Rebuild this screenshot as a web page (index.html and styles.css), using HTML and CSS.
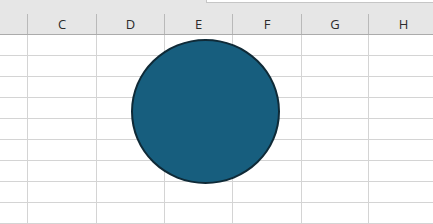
FILE: index.html
```html
<!DOCTYPE html>
<html>
<head>
<meta charset="utf-8">
<link rel="stylesheet" href="styles.css">
</head>
<body>
<div class="sheet">
  <div class="toolbar">
    <div class="spacer"></div>
    <div class="namebox"></div>
  </div>
  <div class="row header">
    <div class="cell c0"></div>
    <div class="cell c1">C</div>
    <div class="cell c2">D</div>
    <div class="cell c3">E</div>
    <div class="cell c4">F</div>
    <div class="cell c5">G</div>
    <div class="cell c6">H</div>
  </div>
  <div class="body">
    <div class="row"><div class="cell c0"></div><div class="cell c1"></div><div class="cell c2"></div><div class="cell c3"></div><div class="cell c4"></div><div class="cell c5"></div><div class="cell c6"></div></div>
    <div class="row"><div class="cell c0"></div><div class="cell c1"></div><div class="cell c2"></div><div class="cell c3"></div><div class="cell c4"></div><div class="cell c5"></div><div class="cell c6"></div></div>
    <div class="row"><div class="cell c0"></div><div class="cell c1"></div><div class="cell c2"></div><div class="cell c3"></div><div class="cell c4"></div><div class="cell c5"></div><div class="cell c6"></div></div>
    <div class="row"><div class="cell c0"></div><div class="cell c1"></div><div class="cell c2"></div><div class="cell c3"></div><div class="cell c4"></div><div class="cell c5"></div><div class="cell c6"></div></div>
    <div class="row"><div class="cell c0"></div><div class="cell c1"></div><div class="cell c2"></div><div class="cell c3"></div><div class="cell c4"></div><div class="cell c5"></div><div class="cell c6"></div></div>
    <div class="row"><div class="cell c0"></div><div class="cell c1"></div><div class="cell c2"></div><div class="cell c3"></div><div class="cell c4"></div><div class="cell c5"></div><div class="cell c6"></div></div>
    <div class="row"><div class="cell c0"></div><div class="cell c1"></div><div class="cell c2"></div><div class="cell c3"></div><div class="cell c4"></div><div class="cell c5"></div><div class="cell c6"></div></div>
    <div class="row"><div class="cell c0"></div><div class="cell c1"></div><div class="cell c2"></div><div class="cell c3"></div><div class="cell c4"></div><div class="cell c5"></div><div class="cell c6"></div></div>
    <div class="row"><div class="cell c0"></div><div class="cell c1"></div><div class="cell c2"></div><div class="cell c3"></div><div class="cell c4"></div><div class="cell c5"></div><div class="cell c6"></div></div>
  </div>
  <div class="shape"></div>
</div>
</body>
</html>
```
FILE: styles.css
```css
html, body {
  margin: 0;
  padding: 0;
  background: #ffffff;
  overflow: hidden;
}
.sheet {
  position: relative;
  width: 433px;
  height: 224px;
  overflow: hidden;
  font-family: "Open Sans", "Liberation Sans", sans-serif;
}
.toolbar {
  display: flex;
  height: 14px;
  background: #e6e6e6;
}
.spacer {
  flex: 0 0 206px;
}
.namebox {
  flex: 1;
  height: 2px;
  background: #ffffff;
  border-left: 1px solid #c6c6c6;
  border-bottom: 1px solid #c6c6c6;
}
.row {
  display: flex;
  height: 21px;
  box-sizing: border-box;
  border-bottom: 1px solid #d4d4d4;
}
.cell {
  box-sizing: border-box;
  border-right: 1px solid #d4d4d4;
  flex: none;
}
.c0 { width: 28px; }
.c1 { width: 69px; }
.c2 { width: 68px; }
.c3 { width: 68px; }
.c4 { width: 69px; }
.c5 { width: 67px; }
.c6 { width: 70px; }
.header {
  background: #e6e6e6;
  border-bottom: 1px solid #ababab;
}
.header .cell {
  border-right-color: #b9b9b9;
  display: flex;
  align-items: center;
  justify-content: center;
  font-size: 13px;
  color: #2b2b2b;
  line-height: 20px;
}
.shape {
  position: absolute;
  left: 131px;
  top: 39px;
  width: 149px;
  height: 145px;
  box-sizing: border-box;
  border: 2px solid #0f2a37;
  border-radius: 50%;
  background: #175e7e;
}
```
